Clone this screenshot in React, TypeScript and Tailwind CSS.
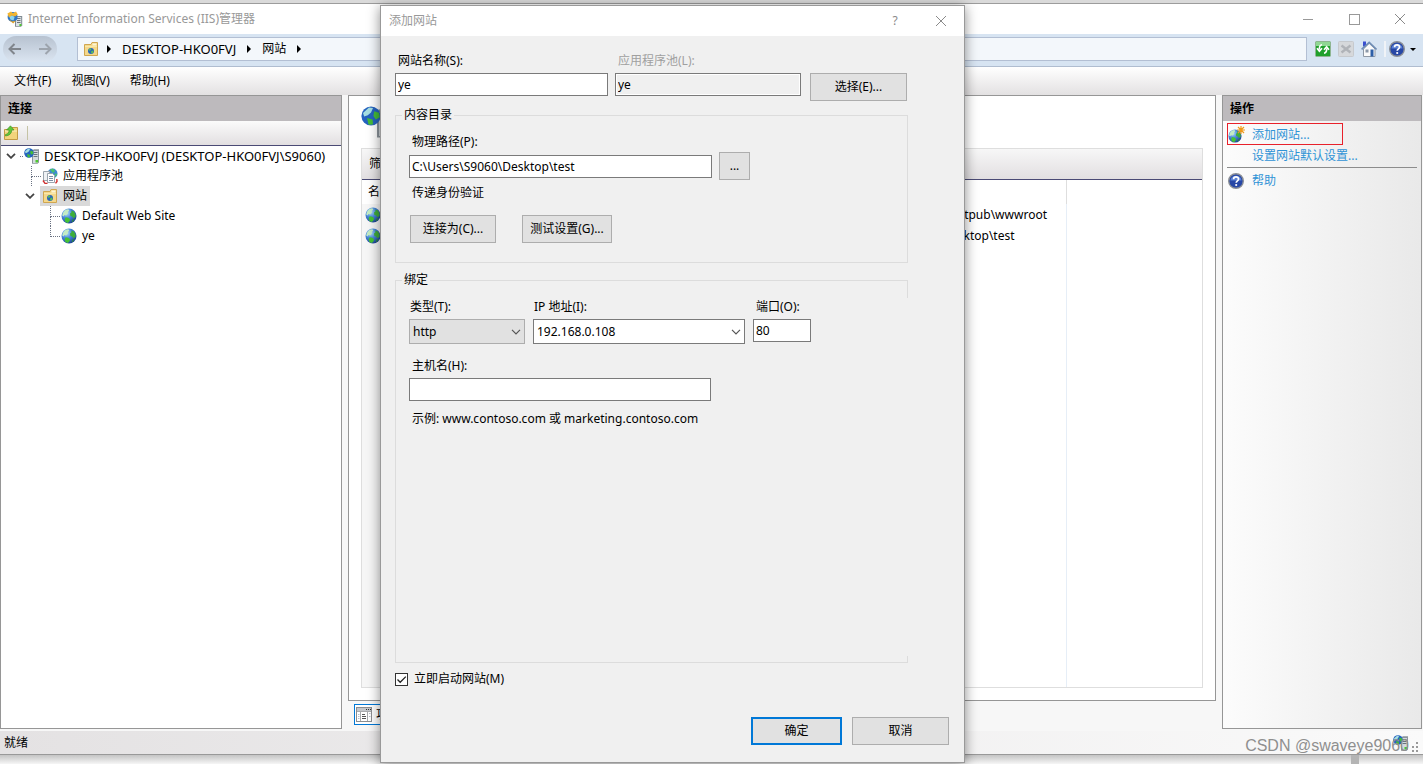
import type { ReactNode } from 'react';

function GlobeIcon({ className = 'size-4' }: { className?: string }) {
  return (
    <svg viewBox="0 0 16 16" className={className} aria-hidden="true">
      <defs>
        <radialGradient id="sea" cx="35%" cy="30%" r="75%">
          <stop offset="0" stopColor="#b5def8" />
          <stop offset="0.45" stopColor="#4a8bdc" />
          <stop offset="1" stopColor="#1b4192" />
        </radialGradient>
      </defs>
      <circle cx="8" cy="8" r="7.5" fill="url(#sea)" />
      <path d="M2.2 4.5C3.4 2.4 5.4 1.2 7.4 1.2L8.2 2.6 6.8 4 7 5.6 5.2 7.4 3.4 7 2.6 8.4 1.2 7.6Z" fill="#c4ecc4" />
      <path d="M10.2 2.4 13 3.6 14.6 6.4 14.4 9 12.4 10.2 11.2 8.6 9.4 8 9 5.6 10.6 4.2Z" fill="#3fae3a" />
      <path d="M4.6 9.2 7.4 9.8 9.2 11.6 8.4 13.6 6.8 15 4.4 14 3.6 11.6Z" fill="#45c234" />
      <path d="M11.6 11.6 13.4 11 12 13.6 10.6 14.2Z" fill="#2d8f35" />
    </svg>
  );
}

function ServerIcon({ className = 'size-4' }: { className?: string }) {
  return (
    <svg viewBox="0 0 16 16" className={className} aria-hidden="true">
      <path d="M8 2.5 10 1.2H15V14.5L13.5 15.8H8Z" fill="#8c959c" />
      <path d="M9 3H14V15H9Z" fill="#d3d9dd" />
      <path d="M9.5 4.5H13.5M9.5 6.5H13.5M9.5 8.5H13.5" stroke="#6b757c" />
      <rect x="11.5" y="12" width="2.5" height="2.5" fill="#4fc92f" />
      <circle cx="5" cy="5" r="4.8" fill="#2563bf" />
      <path d="M1 3.5 4 .8 6 1 5 3.2 3.4 4.6 1.6 5.2Z" fill="#a7dfe2" />
      <path d="M6.6 2.6 9 3.4 9.4 5.6 7.4 6.8 6.2 5ZM3 6 5.8 6.8 6 9.2 3.8 9.4Z" fill="#44bd38" />
    </svg>
  );
}

function AppIcon() {
  return (
    <svg viewBox="0 0 16 16" className="size-4" aria-hidden="true">
      <path d="M8 5H15.2V14.6L14 15.8H8Z" fill="#7f8a92" />
      <path d="M9 6H14.2V15H9Z" fill="#dce1e4" />
      <path d="M10 7.5H13.5M10 9.5H13.5M10 11.5H13.5" stroke="#6b757c" />
      <rect x="12.4" y="13" width="2" height="2" fill="#4fc92f" />
      <circle cx="5.6" cy="6" r="5" fill="#2d75c7" />
      <path d="M2 4.6 6 4.4 7.6 6.4 6.4 9.6 3.4 8.6Z" fill="#8ed4ea" />
      <path d="M.4 2.4 4 .4 6 2.2 9 .6 10.8 3.6 8 5.6 4.8 4.4 2 6.6Z" fill="#f3b52f" />
      <path d="M1.6 8.4 5.6 10.4 9 9.6 6.2 12.4Z" fill="#e3a225" />
    </svg>
  );
}

function SiteFolderIcon() {
  return (
    <svg viewBox="0 0 16 16" className="size-4" aria-hidden="true">
      <path d="M1.5 3.5V14.5H14.5V1.5H9L8 3.5Z" fill="#f4d88b" stroke="#d0a650" />
      <path d="M9.5 2.5H13.5V4.5H9.5Z" fill="#fdf5d5" />
      <path d="M2 5.5H14" stroke="#fae9a9" />
      <circle cx="8" cy="10" r="3" fill="#2a66b8" />
      <path d="M5.6 8.8 7.6 7.2 8.4 8.6 6.8 10ZM8.4 10 10.6 9.6 9.8 12 8 12.6Z" fill="#5cc64b" />
    </svg>
  );
}

function AppPoolIcon() {
  return (
    <svg viewBox="0 0 16 16" className="size-4" aria-hidden="true">
      <circle cx="10.5" cy="5.5" r="5" fill="#3f8ad0" />
      <path d="M8 1.6 11 .6 13 3 11 5ZM12.6 5.4 15.2 6 13.6 9Z" fill="#4cc26c" />
      <path d="M1.5 3.5H7.5V12.5H1.5Z" fill="#eef1f4" stroke="#9aa4ae" />
      <path d="M5.5 5.5H10.5L12.5 7.5V14.5H5.5Z" fill="#fff" stroke="#9aa4ae" />
      <path d="M7 8.5H11M7 10.5H11M7 12.5H11" stroke="#7d8fa6" />
      <path d="M1 12.5 3 15.3 5.5 15.5M14.8 11 15 13.5 13.5 15.4" stroke="#cf2f2f" strokeWidth="1.4" fill="none" />
    </svg>
  );
}

function FolderUpIcon() {
  return (
    <svg viewBox="0 0 16 16" className="size-4" aria-hidden="true">
      <path d="M1.5 4.5V14.5H14.5V2.5H9L8 4.5Z" fill="#f3d47c" stroke="#c39b45" />
      <path d="M2 6H14" stroke="#fcefbd" />
      <path d="M2.5 9.5C5 9 6 7.5 6 5H3.5L7.5.8 11 5H8.8C8.6 8.6 6.5 10.6 2.5 11Z" fill="#5fc63a" stroke="#3a8f24" strokeWidth=".6" />
    </svg>
  );
}

function HelpIcon() {
  return (
    <svg viewBox="0 0 16 16" className="size-4" aria-hidden="true">
      <circle cx="8" cy="8" r="7.3" fill="#2747a6" stroke="#8b8f96" strokeWidth="1.4" />
      <path d="M2.4 7.4A5.7 5.7 0 0 1 13.6 7.4Z" fill="#5d83d6" />
      <path d="M5.6 6.2C5.6 3.2 10.6 3.2 10.6 6.1 10.6 7.9 8.2 7.9 8.2 9.8" fill="none" stroke="#fff" strokeWidth="1.7" />
      <circle cx="8.2" cy="12" r="1.1" fill="#fff" />
    </svg>
  );
}

function RefreshIcon() {
  return (
    <svg viewBox="0 0 16 16" className="size-4" aria-hidden="true">
      <rect x=".5" y=".5" width="15" height="15" rx="1" fill="#1fa02c" stroke="#8fb592" />
      <path d="M1 1H15V5H1Z" fill="#8fd793" />
      <path d="M7 3.8C5 4 4.3 5.5 4.3 8.5M2 7.2 4.4 10.2 7 7.2M9 12.2C11 12 11.7 10.5 11.7 7.5M9 8.8 11.6 5.8 14 8.8" fill="none" stroke="#fff" strokeWidth="1.6" />
    </svg>
  );
}

function StopIcon() {
  return (
    <svg viewBox="0 0 16 16" className="size-4" aria-hidden="true">
      <rect x=".5" y=".5" width="15" height="15" rx="1" fill="#d6d8db" stroke="#c6c9cd" />
      <path d="M3.5 4.5 12.5 11.5M12.5 4.5 3.5 11.5" stroke="#b0b3b8" strokeWidth="2.4" />
    </svg>
  );
}

function HomeIcon() {
  return (
    <svg viewBox="0 0 16 16" className="size-4" aria-hidden="true">
      <path d="M2 .5H5V5.5H2Z" fill="#3a4fd0" />
      <path d="M2.5 8V15.5H14V8L8.2 2.4Z" fill="#fafafa" stroke="#8e98a5" />
      <path d="M.6 8.4 8.2 1.4 15.6 8.4" fill="none" stroke="#6f8db5" strokeWidth="1.6" />
      <rect x="4.5" y="8.5" width="3" height="3" fill="#8b98a8" />
      <rect x="9.5" y="8.5" width="3" height="7" fill="#2d5fa8" />
    </svg>
  );
}

function FeatureViewIcon() {
  return (
    <svg viewBox="0 0 16 16" className="size-4" aria-hidden="true">
      <rect x=".5" y=".5" width="15" height="14" fill="#fff" stroke="#8b8d90" />
      <path d="M1 1H15V4H1Z" fill="#c3c6ca" />
      <path d="M10 2.5H11M12 2.5H13M14 2.5H15" stroke="#333" />
      <path d="M4.5 4V14M11.5 4V14M1 4.5H15" stroke="#a9abae" />
      <path d="M6 7.5H9M6 9.5H10M6 11.5H10" stroke="#555" />
      <path d="M2 7.5H3.5M2 9.5H3.5M2 11.5H3.5M13 6.5H14.5M13 9.5H14.5" stroke="#b6bfca" />
    </svg>
  );
}

function AddSiteIcon() {
  return (
    <span className="relative size-4 shrink-0">
      <GlobeIcon className="absolute bottom-0 left-0 size-[14px]" />
      <svg viewBox="0 0 8 8" className="absolute -top-px -right-px size-2" aria-hidden="true">
        <path d="M4 0V8M0 4H8M1 1 7 7M7 1 1 7" stroke="#f09a1a" strokeWidth="1.2" />
      </svg>
    </span>
  );
}

function CloseIcon() {
  return (
    <svg viewBox="0 0 12 12" className="size-3" aria-hidden="true">
      <path d="M1 1 11 11M11 1 1 11" stroke="#8a8a8a" />
    </svg>
  );
}

function Chevron() {
  return (
    <svg viewBox="0 0 10 6" className="h-1.5 w-2.5 shrink-0" aria-hidden="true">
      <path d="M1 .8 5 4.8 9 .8" fill="none" stroke="#444" strokeWidth="1.8" />
    </svg>
  );
}

function Arrow() {
  return (
    <svg viewBox="0 0 4 8" className="h-2 w-1 shrink-0" aria-hidden="true">
      <path d="M0 0 4 4 0 8Z" fill="#000" />
    </svg>
  );
}

/* dotted connector in front of a tree node */
function Branch({ last = false }: { last?: boolean }) {
  return (
    <span className="flex h-5 w-[10px] shrink-0 flex-col">
      <span className="h-[11px] border-b border-l border-dotted border-gray-500" />
      {!last && <span className="flex-1 border-l border-dotted border-gray-500" />}
    </span>
  );
}

function TitleBar() {
  return (
    <header className="flex h-[30px] shrink-0 items-center bg-white px-[7px]">
      <AppIcon />
      <h1 className="ml-[5px] flex-1 text-[#999]">Internet Information Services (IIS)管理器</h1>
      <div className="flex items-center gap-[34px] pr-[10px]">
        <button type="button" aria-label="最小化" className="flex size-3 items-center">
          <span className="h-px w-[10px] bg-[#999]" />
        </button>
        <button type="button" aria-label="最大化" className="size-[11px] border border-[#999]" />
        <button type="button" aria-label="关闭">
          <CloseIcon />
        </button>
      </div>
    </header>
  );
}

function AddressBar() {
  return (
    <div className="flex h-[33px] shrink-0 items-center border-b border-[#b0bdd0] bg-[#d7e4f2] pr-[7px] pb-[2px] pl-[3px]">
      <div className="flex h-[26px] w-[54px] items-center justify-between rounded-full bg-linear-to-b from-[#b7c2d0] to-[#dbe5f1] px-[5px]">
        <button type="button" aria-label="后退">
          <svg viewBox="0 0 14 12" className="h-3 w-3.5">
            <path d="M6.5 1 1.5 6 6.5 11M1.5 6H13" fill="none" stroke="#80858c" strokeWidth="2" />
          </svg>
        </button>
        <button type="button" aria-label="前进">
          <svg viewBox="0 0 14 12" className="h-3 w-3.5">
            <path d="M7.5 1 12.5 6 7.5 11M12.5 6H1" fill="none" stroke="#9da4ad" strokeWidth="2" />
          </svg>
        </button>
      </div>
      <nav className="ml-5 flex h-6 flex-1 items-center border border-[#b3bfd3] bg-[#f3f7fb] pl-[5px]">
        <SiteFolderIcon />
        <span className="ml-2 flex items-center gap-[11px]">
          <Arrow />
          <a href="#server" className="text-[13px] text-black">DESKTOP-HKO0FVJ</a>
          <Arrow />
          <a href="#sites" className="text-black">网站</a>
          <Arrow />
        </span>
      </nav>
      <div className="ml-2 flex items-center gap-[7px]">
        <button type="button" aria-label="刷新"><RefreshIcon /></button>
        <button type="button" aria-label="停止"><StopIcon /></button>
        <button type="button" aria-label="主页"><HomeIcon /></button>
        <button type="button" aria-label="帮助" className="flex items-center border-l-2 border-[#f0f3f7] pl-[3px]">
          <HelpIcon />
          <svg viewBox="0 0 6 3" className="ml-[5px] h-[3px] w-1.5">
            <path d="M0 0H6L3 3Z" fill="#000" />
          </svg>
        </button>
      </div>
    </div>
  );
}

function Connections() {
  return (
    <aside className="flex w-[342px] shrink-0 flex-col border border-[#969696] bg-white">
      <h2 className="h-[25px] bg-[#bdbabd] pl-[7px] leading-[25px] font-bold">连接</h2>
      <div className="flex h-[25px] items-center gap-2 border-b border-[#4a4a75] bg-linear-to-b from-[#fbfbfb] to-[#e2dfe1] pl-[2px]">
        <button type="button" aria-label="上移一级"><FolderUpIcon /></button>
        <span className="h-[14px] w-px bg-[#c5c3a5]" />
      </div>
      <ul>
        <li>
          <div className="flex h-5 items-center pl-[5px]">
            <Chevron />
            <span className="mr-px ml-1 w-[3px] border-b border-dotted border-gray-500" />
            <ServerIcon />
            <span className="ml-1 text-[13px]">DESKTOP-HKO0FVJ (DESKTOP-HKO0FVJ\S9060)</span>
          </div>
          <ul>
            <li className="flex h-5 items-center pl-[30px]">
              <Branch />
              <span className="flex items-center gap-[5px] pl-px"><AppPoolIcon />应用程序池</span>
            </li>
            <li>
              <div className="flex h-5 items-center pl-[24px]">
                <Chevron />
                <span className="ml-[5px] flex h-5 items-center gap-[5px] bg-[#d9d9d9] pr-[3px] pl-[2px]">
                  <SiteFolderIcon />网站
                </span>
              </div>
              <ul>
                <li className="flex h-5 items-center pl-[49px]">
                  <Branch />
                  <span className="flex items-center gap-[5px] pl-px"><GlobeIcon />Default Web Site</span>
                </li>
                <li className="flex h-5 items-center pl-[49px]">
                  <Branch last />
                  <span className="flex items-center gap-[5px] pl-px"><GlobeIcon />ye</span>
                </li>
              </ul>
            </li>
          </ul>
        </li>
      </ul>
    </aside>
  );
}

const paths = ['%SystemDrive%\\inetpub\\wwwroot', 'C:\\Users\\S9060\\Desktop\\test'];

function SiteList() {
  return (
    <main className="flex min-w-0 flex-1 flex-col">
      <div className="flex flex-1 flex-col border border-[#969696] bg-white px-3 pb-3">
        <div className="flex h-[52px] items-center">
          <ServerIcon className="size-8" />
        </div>
        <div className="flex flex-1 flex-col border border-[#dedede]">
          <div className="flex h-[31px] shrink-0 items-center border-b border-[#4a4a75] bg-linear-to-b from-[#f7f7f7] to-[#e2dfe1] pl-[7px]">
            筛选:
          </div>
          <table className="h-full flex-1 table-fixed text-left">
            <thead>
              <tr className="h-6">
                <th className="w-[481px] pl-[6px] font-normal">名称</th>
                <th className="w-[223px] border-r border-[#dedede]" />
                <th />
              </tr>
            </thead>
            <tbody>
              {paths.map((path) => (
                <tr key={path} className="h-[21px]">
                  <td className="bg-[#f6f6f6] pl-[3px]"><GlobeIcon /></td>
                  <td className="border-r border-[#e6eef7] pl-[9px]">{path}</td>
                  <td />
                </tr>
              ))}
              <tr>
                <td className="bg-[#f6f6f6]" />
                <td className="border-r border-[#e6eef7]" />
                <td />
              </tr>
            </tbody>
          </table>
        </div>
      </div>
      <div className="flex h-7 shrink-0 items-start pt-[3px] pl-[6px]">
        <button type="button" className="flex h-[21px] items-center gap-1 border border-[#0078d7] bg-white px-px">
          <FeatureViewIcon />功能视图
        </button>
      </div>
    </main>
  );
}

function Actions() {
  return (
    <aside className="flex w-[200px] shrink-0 flex-col border border-[#969696] bg-linear-to-r from-[#fcfcfc] to-[#e9e9e9]">
      <h2 className="h-[25px] bg-[#bdbabd] pl-[7px] leading-[25px] font-bold">操作</h2>
      <div className="flex flex-col px-1 pt-[2px] text-[#2f93d6]">
        <a href="#add" className="flex h-[22px] w-[116px] items-center gap-2 border border-[#e8212b] pt-px">
          <AddSiteIcon />添加网站...
        </a>
        <a href="#defaults" className="flex h-[22px] items-center pl-[25px]">设置网站默认设置...</a>
        <hr className="border-[#8c8c8c]" />
        <a href="#help" className="flex h-[26px] items-center gap-2 pl-px">
          <HelpIcon />帮助
        </a>
      </div>
    </aside>
  );
}

function TextField({ id, label, value, readOnly, className }: { id: string; label: string; value: string; readOnly?: boolean; className: string }) {
  return (
    <div className="flex flex-col gap-1">
      <label htmlFor={id} className={readOnly ? 'pl-[3px] text-[#a0a0a0]' : 'pl-[3px]'}>{label}</label>
      <input id={id} type="text" defaultValue={value} readOnly={readOnly} className={className} />
    </div>
  );
}

function SelectField({ id, label, value, className }: { id: string; label: string; value: string; className: string }) {
  return (
    <div className="flex flex-col gap-1">
      <label htmlFor={id} className="pl-px">{label}</label>
      <div className="relative">
        <select id={id} className={className}>
          <option>{value}</option>
        </select>
        <svg viewBox="0 0 10 6" className="pointer-events-none absolute top-[10px] right-1 h-1.5 w-2.5" aria-hidden="true">
          <path d="M1 .8 5 4.8 9 .8" fill="none" stroke="#555" strokeWidth="1.2" />
        </svg>
      </div>
    </div>
  );
}

function DialogButton({ className, children }: { className: string; children: ReactNode }) {
  return (
    <button type="button" className={`h-7 shrink-0 border bg-[#e1e1e1] ${className}`}>
      {children}
    </button>
  );
}

function AddSiteDialog() {
  return (
    <div
      role="dialog"
      aria-labelledby="dialog-title"
      className="absolute top-[5px] bottom-px left-[380px] flex w-[585px] flex-col border border-[#999] bg-[#f0f0f0] shadow-[0_2px_12px_rgba(0,0,0,0.45)]"
    >
      <div className="flex h-[30px] shrink-0 items-center bg-white pr-[17px] pl-2">
        <h2 id="dialog-title" className="flex-1 text-[#999]">添加网站</h2>
        <button type="button" aria-label="帮助" className="mr-[34px] w-3 text-[#8a8a8a]">?</button>
        <button type="button" aria-label="关闭"><CloseIcon /></button>
      </div>

      <form className="flex flex-1 flex-col pt-[17px] pr-[15px] pb-[17px] pl-[14px]">
        <div className="flex items-end">
          <div className="flex h-12 gap-[7px]">
            <TextField id="site-name" label="网站名称(S):" value="ye" className="h-[23px] w-[213px] border border-[#7a7a7a] bg-white px-[2px]" />
            <TextField id="app-pool" label="应用程序池(L):" value="ye" readOnly className="h-[23px] w-[186px] border border-[#7a7a7a] bg-[#f0f0f0] px-[2px] inset-ring inset-ring-white" />
          </div>
          <DialogButton className="ml-[9px] w-[97px] border-[#adadad]">选择(E)...</DialogButton>
        </div>

        {/* Content directory */}
        <fieldset className="mt-[6px] mr-[41px] border border-[#dcdcdc] pt-[11px] pb-[19px] pl-[13px]">
          <legend className="-ml-[7px] px-[2px]">内容目录</legend>
          <label htmlFor="path" className="block pl-[3px]">物理路径(P):</label>
          <div className="mt-[2px] flex h-7 items-center gap-[7px]">
            <input id="path" type="text" defaultValue="C:\Users\S9060\Desktop\test" className="h-[23px] w-[303px] border border-[#7a7a7a] bg-white px-[2px]" />
            <DialogButton className="w-[31px] border-[#adadad]">...</DialogButton>
          </div>
          <p className="mt-[5px] pl-[3px]">传递身份验证</p>
          <div className="mt-[14px] flex gap-[26px] pl-px">
            <DialogButton className="w-[86px] border-[#adadad]">连接为(C)...</DialogButton>
            <DialogButton className="w-[90px] border-[#adadad]">测试设置(G)...</DialogButton>
          </div>
        </fieldset>

        {/* Binding */}
        <fieldset className="relative mt-[9px] mr-[41px] flex-1 border border-[#dcdcdc] pt-[11px] pl-[13px]">
          <legend className="-ml-[7px] px-[2px]">绑定</legend>
          <span className="absolute top-[10px] -right-px bottom-[6px] w-px bg-[#f0f0f0]" />
          <div className="flex items-start gap-2">
            <SelectField id="type" label="类型(T):" value="http" className="h-[25px] w-[116px] appearance-none border border-[#adadad] bg-[#e1e1e1] px-[3px]" />
            <SelectField id="ip" label="IP 地址(I):" value="192.168.0.108" className="h-[25px] w-[212px] appearance-none border border-[#7a7a7a] bg-white px-[3px]" />
            <TextField id="port" label="端口(O):" value="80" className="h-[23px] w-[58px] border border-[#7a7a7a] bg-white px-[2px]" />
          </div>
          <div className="mt-[14px] flex">
            <TextField id="host" label="主机名(H):" value="" className="h-[23px] w-[302px] border border-[#7a7a7a] bg-white px-[2px]" />
          </div>
          <p className="mt-[10px] pl-[3px]">示例: www.contoso.com 或 marketing.contoso.com</p>
        </fieldset>

        <label className="mt-2 flex items-center gap-[6px]">
          <span className="relative flex">
            <input type="checkbox" defaultChecked className="size-[13px] appearance-none border border-[#333] bg-white" />
            <svg viewBox="0 0 13 13" className="pointer-events-none absolute inset-0 size-[13px]" aria-hidden="true">
              <path d="M2.5 6.5 5.2 9.3 10.8 3.6" fill="none" stroke="#222" strokeWidth="1.3" />
            </svg>
          </span>
          立即启动网站(M)
        </label>

        <div className="mt-[30px] flex justify-end gap-[10px]">
          <DialogButton className="w-[91px] border-[#0078d7] inset-ring inset-ring-[#0078d7]">确定</DialogButton>
          <DialogButton className="w-[97px] border-[#adadad]">取消</DialogButton>
        </div>
      </form>
    </div>
  );
}

export default function App() {
  return (
    <div className="relative flex h-screen flex-col overflow-hidden bg-[#f7f7f7] font-['Noto_Sans','Noto_Sans_CJK_SC',sans-serif] text-xs leading-4 text-black">
      <div className="h-1 shrink-0 border-b border-[#9c9c9c] bg-[#dadada]" />
      <TitleBar />
      <AddressBar />
      <div className="flex h-7 shrink-0 items-center gap-5 bg-linear-to-b from-white to-[#e3e1e2] pl-[14px]">
        <button type="button">文件(F)</button>
        <button type="button">视图(V)</button>
        <button type="button">帮助(H)</button>
      </div>
      <div className="flex min-h-0 flex-1 gap-[6px] pr-px">
        <Connections />
        <SiteList />
        <Actions />
      </div>
      <footer className="mt-[2px] flex h-6 shrink-0 items-center border-b border-[#999] bg-linear-to-r from-[#e4e2e3] to-[#fafafa] px-1">
        <span className="flex-1">就绪</span>
        <ServerIcon />
        <svg viewBox="0 0 10 10" className="mt-2 size-[10px]" aria-hidden="true">
          <path d="M7 0H9V2H7ZM7 4H9V6H7ZM3 4H5V6H3ZM7 8H9V10H7ZM3 8H5V10H3Z" fill="#999" />
        </svg>
      </footer>
      <div className="flex h-[9px] shrink-0 justify-end bg-linear-to-b from-[#c4c4c4] to-[#f6f6f6] pr-16">
        <span className="w-2 bg-[#b4b4b4]" />
      </div>

      <AddSiteDialog />

      <span className="absolute right-[14px] bottom-2 font-['Liberation_Sans',sans-serif] text-base leading-5 text-[#8f8f8f]">
        CSDN @swaveye9060
      </span>
    </div>
  );
}
